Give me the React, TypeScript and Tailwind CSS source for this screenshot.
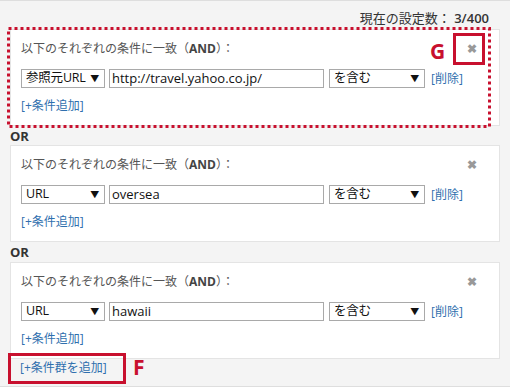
import React from "react";

const RED = "#c8102e";

function Select({ label, width }: { label: string; width: string }) {
  return (
    <div
      className={`${width} h-[19px] border border-[#a9a9a9] bg-white flex items-center justify-between pl-[4px] pr-[5px] text-[12.5px] tracking-[-0.2px] text-[#111] leading-none whitespace-nowrap`}
    >
      <span>{label}</span>
      <span className="text-[9px] text-[#111]">▼</span>
    </div>
  );
}

function Card({
  sel,
  value,
  highlight,
}: {
  sel: string;
  value: string;
  highlight?: boolean;
}) {
  return (
    <div className="relative bg-white border border-[#e4e4e4] h-[97px] px-[10px] pt-[11px]">
      <div className="flex items-center justify-between h-[16px] text-[12px] text-[#555] leading-none whitespace-nowrap">
        <span>
          以下のそれぞれの条件に一致（<b className="text-[#444]">AND</b>）：
        </span>
        <span className="text-[#999] text-[12px] font-bold mr-[12px] leading-none">✖</span>
      </div>
      <div className="flex items-center mt-[12px]">
        <Select label={sel} width="w-[84px]" />
        <div className="ml-[4px] w-[215px] h-[19px] border border-[#a9a9a9] bg-white flex items-center pl-[2px] text-[13px] text-[#111] leading-none">
          {value}
        </div>
        <div className="ml-[5px]">
          <Select label="を含む" width="w-[96px]" />
        </div>
        <span className="ml-[6px] text-[12px] text-[#2f6fae] leading-none whitespace-nowrap">[削除]</span>
      </div>
      <div className="mt-[10px] h-[16px] flex items-center text-[12px] text-[#2f6fae] leading-none">
        [+条件追加]
      </div>
      {highlight && (
        <>
          <svg
            className="absolute left-[-4px] top-[-3px] pointer-events-none"
            width="484"
            height="101"
          >
            <rect
              x="1.5"
              y="1.5"
              width="481"
              height="98"
              fill="none"
              stroke={RED}
              strokeWidth="3"
              strokeDasharray="3 3"
            />
          </svg>
          <div className="absolute left-[419px] top-[11px] text-[21px] font-bold leading-none text-[#c8102e]">
            G
          </div>
          <div className="absolute left-[442px] top-[3px] w-[32px] h-[32px] border-[3px] border-[#c8102e]" />
        </>
      )}
    </div>
  );
}

export default function App() {
  return (
    <div
      className="w-[510px] h-[387px] bg-[#f4f4f4] border-t border-b border-[#dedede] px-[10px] overflow-hidden"
      style={{ fontFamily: '"Open Sans", "Noto Sans CJK JP", sans-serif' }}
    >
      <div className="h-[28px] flex items-center justify-end pr-[11px] pt-[6px] text-[13px] text-[#333] leading-none">
        現在の設定数：&nbsp;<b className="font-semibold">3/400</b>
      </div>
      <Card sel="参照元URL" value="http://travel.yahoo.co.jp/" highlight />
      <div className="h-[19px] pt-[1px] flex items-center text-[13px] font-bold text-[#333] leading-none">OR</div>
      <Card sel="URL" value="oversea" />
      <div className="h-[20px] flex items-center text-[13px] font-bold text-[#333] leading-none">OR</div>
      <Card sel="URL" value="hawaii" />
      <div className="relative h-[18px] flex items-center pl-[10px] text-[12px] text-[#2f6fae] leading-none">
        [+条件群を追加]
        <div className="absolute left-[-2px] top-[-6px] w-[118px] h-[31px] border-[3px] border-[#c8102e]" />
        <div className="absolute left-[123px] top-[-2px] text-[21px] font-bold leading-none text-[#c8102e]">
          F
        </div>
      </div>
    </div>
  );
}
